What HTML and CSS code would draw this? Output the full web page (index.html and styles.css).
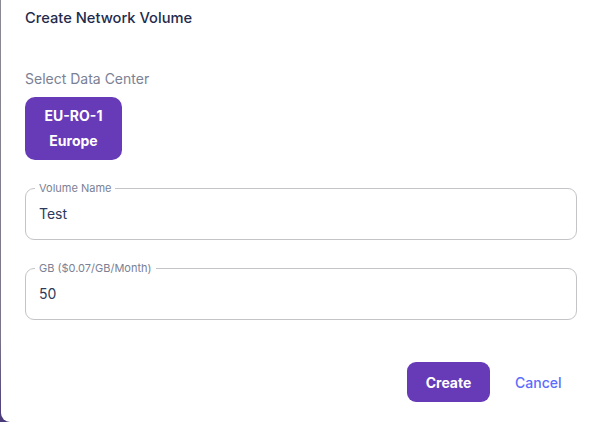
FILE: index.html
```html
<!DOCTYPE html>
<html>
<head>
<meta charset="utf-8">
<link rel="stylesheet" href="styles.css">
</head>
<body>
<div class="dialog">
  <h1 class="title">Create Network Volume</h1>
  <div class="section-label">Select Data Center</div>
  <button class="dc-btn"><span>EU-RO-1</span><span>Europe</span></button>
  <fieldset class="field first">
    <legend>Volume Name</legend>
    <div class="value">Test</div>
  </fieldset>
  <fieldset class="field">
    <legend>GB ($0.07/GB/Month)</legend>
    <div class="value">50</div>
  </fieldset>
  <div class="actions">
    <button class="create">Create</button>
    <button class="cancel">Cancel</button>
  </div>
</div>
</body>
</html>
```

FILE: styles.css
```css
html, body {
  margin: 0;
  padding: 0;
  height: 100%;
  overflow: hidden;
}
body {
  background: linear-gradient(#8a8a94, #7a7488 80%, #4a3a7a);
  padding-left: 1px;
  box-sizing: border-box;
  font-family: Inter, "Noto Sans", sans-serif;
}
.dialog {
  background: #fff;
  height: 422px;
  width: 100%;
  border-bottom-left-radius: 9px;
  box-sizing: border-box;
  padding: 8px 0 0 24px;
}
.title {
  margin: 0;
  font-size: 14.7px;
  line-height: 20px;
  font-weight: 500;
  color: #1f2b4d;
}
.section-label {
  margin-top: 41px;
  font-size: 14px;
  line-height: 20px;
  color: #7b8194;
}
.dc-btn {
  margin-top: 8px;
  width: 97px;
  height: 63px;
  border: none;
  border-radius: 10px;
  background: #673ab7;
  color: #fff;
  font-family: inherit;
  font-size: 14px;
  font-weight: 700;
  display: flex;
  flex-direction: column;
  align-items: center;
  justify-content: center;
  gap: 5px;
  line-height: 20px;
  padding: 0;
}
.field {
  margin: 0;
  width: 552px;
  box-sizing: border-box;
  height: 58px;
  border: 1px solid #c4c4c8;
  border-radius: 9px;
  padding: 0 9px 0 13px;
}
.field.first { margin-top: 22px; }
.field + .field { margin-top: 22px; }
.field legend {
  font-size: 11px;
  line-height: 12px;
  color: #7b8194;
  padding: 0 4px;
  margin-left: -4px;
}
.value {
  padding-top: 10px;
  font-size: 14px;
  line-height: 20px;
  color: #2d3a5c;
}
.actions {
  width: 552px;
  margin-top: 42px;
  display: flex;
  justify-content: flex-end;
  align-items: center;
}
.create {
  width: 83px;
  height: 40px;
  border: none;
  border-radius: 9px;
  background: #673ab7;
  color: #fff;
  font-family: inherit;
  font-size: 14px;
  font-weight: 700;
  padding: 0;
}
.cancel {
  margin-left: 25px;
  margin-right: 17px;
  width: 45px;
  border: none;
  background: none;
  padding: 0;
  font-family: inherit;
  font-size: 14px;
  font-weight: 500;
  color: #5b6cff;
  text-align: center;
  white-space: nowrap;
}
```
